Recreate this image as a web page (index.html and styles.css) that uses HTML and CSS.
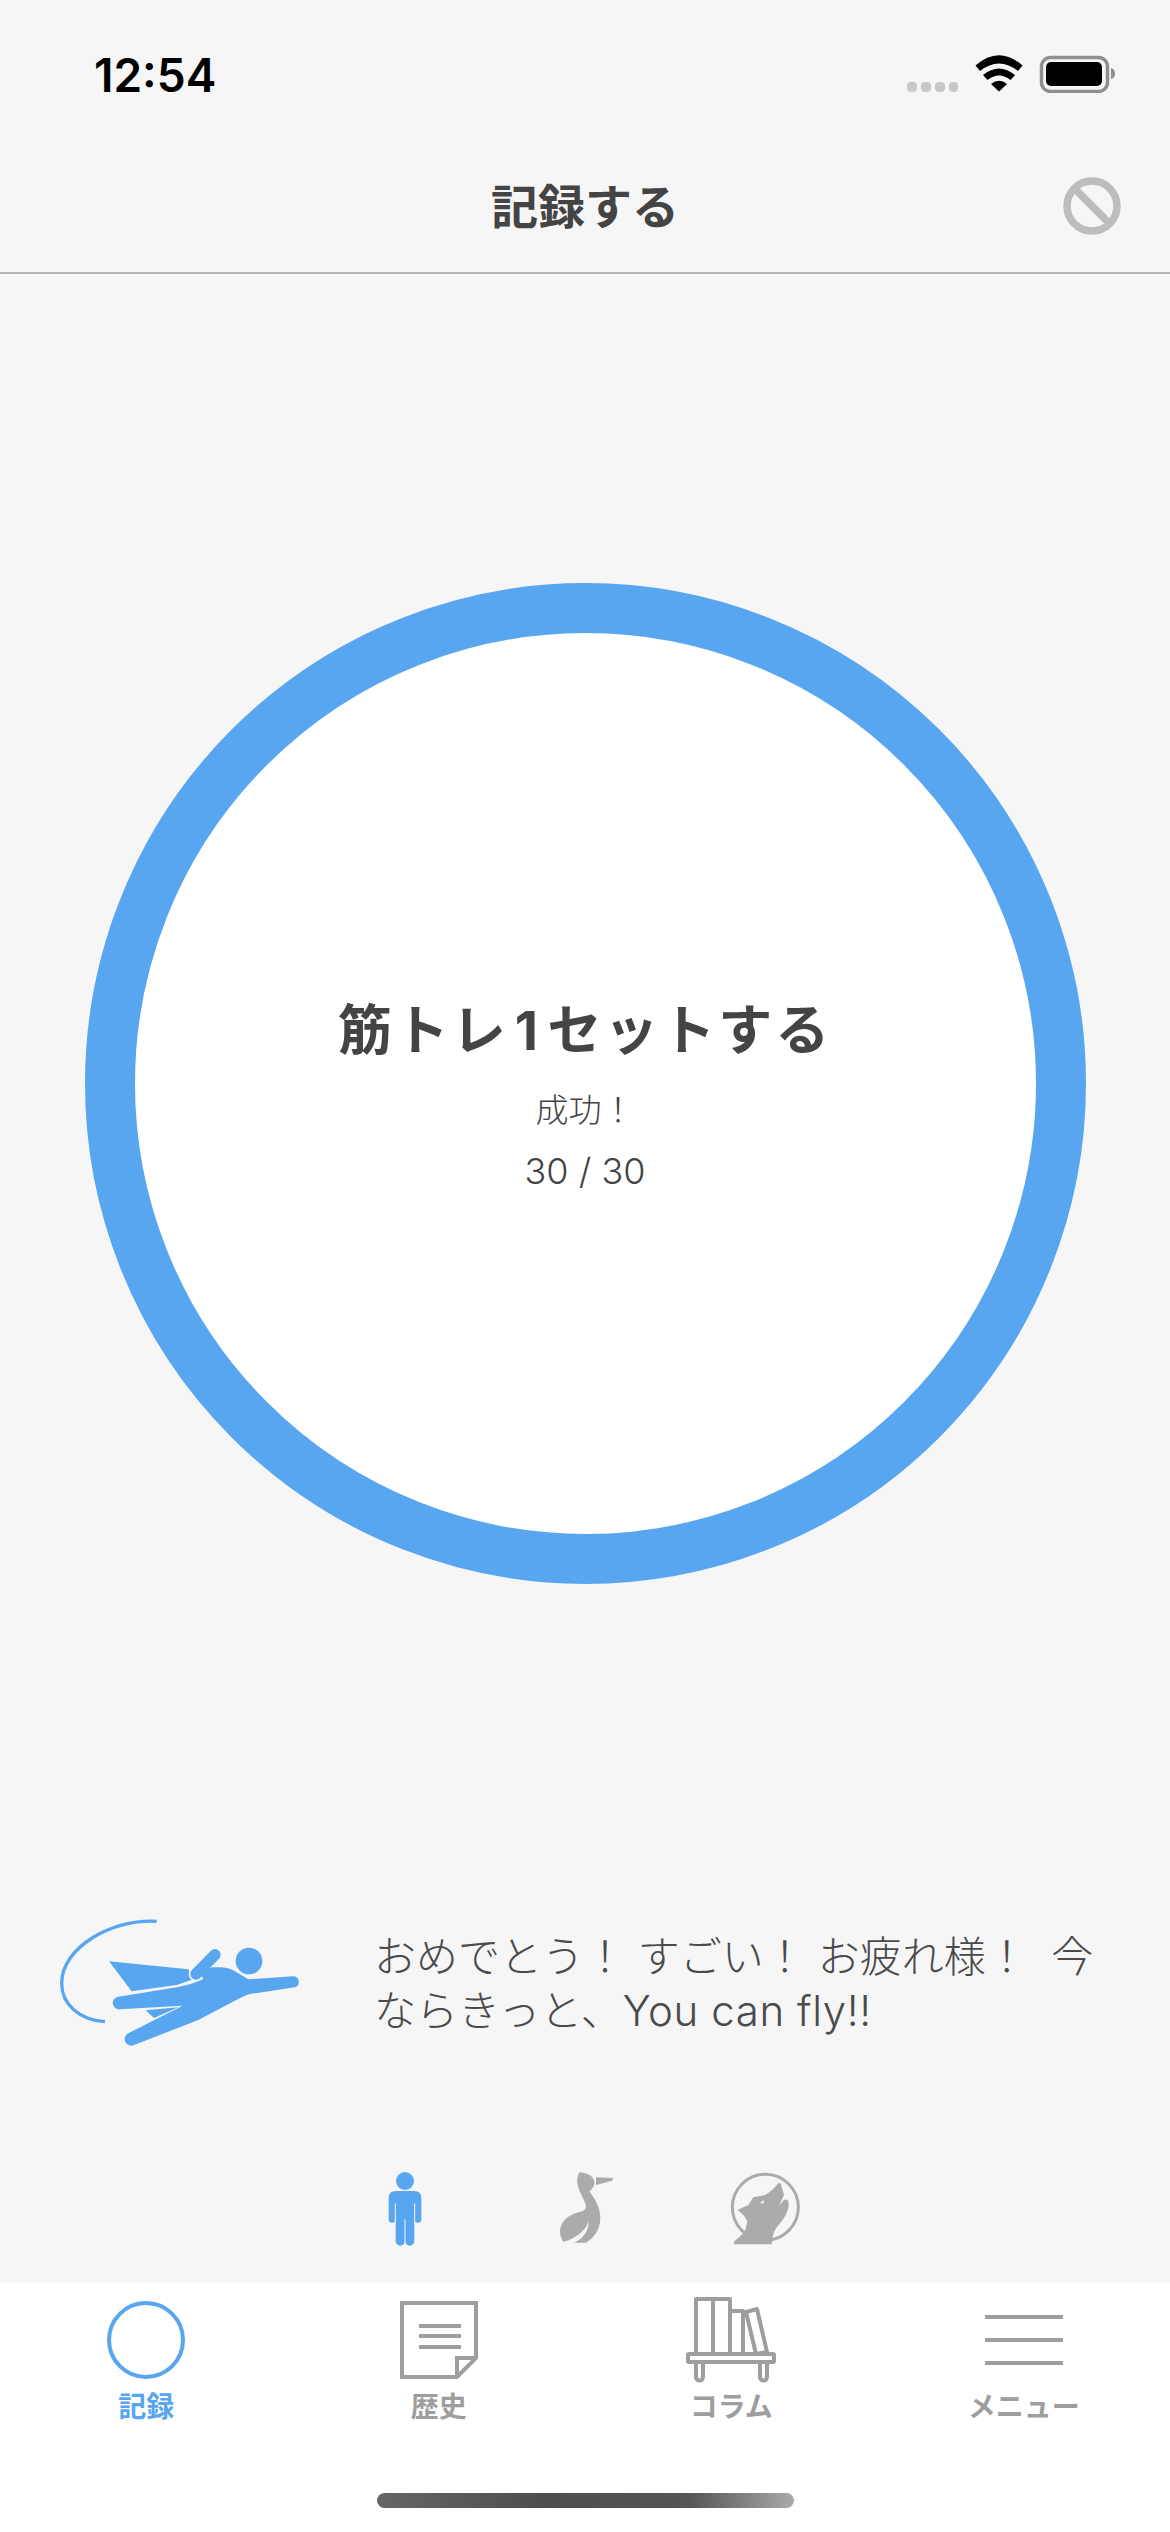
FILE: index.html
```html
<!DOCTYPE html>
<html lang="ja">
<head>
    <meta charset="UTF-8">
    <meta name="viewport" content="width=device-width, initial-scale=1.0">
    <title>記録する</title>
<link rel="stylesheet" href="styles.css">
</head>
<body>
    <div id="app">
        <div class="status">
            <span class="time">12:54</span>
            <svg class="status-icons" width="208" height="38" viewBox="0 0 208 38">
                <rect x="0" y="27" width="10" height="10" rx="4" fill="#c8c8c8"/>
                <rect x="14" y="27" width="10" height="10" rx="4" fill="#c8c8c8"/>
                <rect x="28" y="27" width="10" height="10" rx="4" fill="#c8c8c8"/>
                <rect x="42" y="27" width="9" height="10" rx="4" fill="#c8c8c8"/>
                <path d="M68.5 10.5Q92 -10 115.5 10.5L111 16Q92 1 73 16Z"/>
                <path d="M76 20Q92 7 108 20L103.5 25Q92 16 80.5 25Z"/>
                <path d="M84 29Q92 22.5 100 29L92 36.5Z"/>
                <rect x="134.5" y="2.5" width="66" height="34" rx="9" fill="none" stroke="#8f8f8f" stroke-width="3.5"/>
                <rect x="139" y="7" width="56" height="24" rx="5"/>
                <path d="M204 13Q208 14 208 19Q208 23 204 24Z" fill="#8f8f8f"/>
            </svg>
        </div>

        <div class="nav">
            <h1>記録する</h1>
            <svg class="ban" width="58" height="58" viewBox="0 0 58 58">
                <circle cx="29" cy="29" r="25" fill="none" stroke="#bdbdbd" stroke-width="7.5"/>
                <path d="M12 12L46 46" stroke="#bdbdbd" stroke-width="7.5"/>
            </svg>
        </div>

        <div class="ring">
            <div class="ring-title">筋トレ<span class="num">1</span>セットする</div>
            <div class="ring-sub">成功！</div>
            <div class="ring-count">30 / 30</div>
        </div>

        <div class="message">
            <svg width="330" height="200" viewBox="0 0 990 600">
                <path d="M380 124C250 115 95 200 95 310C95 375 150 420 225 425" fill="none" stroke="#58a6f0" stroke-width="10"/>
                <path class="blue" d="M237 244L475 268L490 298L440 315L305 334Z"/>
                <path class="blue" d="M347 391L445 382L372 414Z"/>
                <path d="M498 282L555 224" stroke="#f6f6f6" stroke-width="44" stroke-linecap="round"/>
                <path d="M498 282L555 224" stroke="#58a6f0" stroke-width="34" stroke-linecap="round"/>
                <circle class="blue" cx="657" cy="243" r="40"/>
                <path class="blue" d="M265 350L440 322Q490 312 520 297L510 280L545 262H575Q600 262 625 280L655 298L790 289A17 17 0 0 1 795 322L660 342Q640 348 600 370L505 420L312 495A18 18 0 0 1 295 460L458 377L270 388A19 19 0 0 1 265 350Z"/>
            </svg>
            <p>おめでとう！ すごい！ お疲れ様！ &nbsp;今ならきっと、<span class="latin">You can fly!!</span></p>
        </div>

        <div class="modes">
            <svg width="100" height="80" viewBox="0 0 300 240">
                <circle class="blue" cx="150" cy="45" r="27"/>
                <path class="blue" d="M122 75H178Q199 75 199 97V160A10.5 10.5 0 0 1 178 160V225A14 14 0 0 1 150 225A14 14 0 0 1 122 225V160A10.5 10.5 0 0 1 101 160V97Q101 75 122 75Z"/>
                <path d="M121 112V172M179 112V172M150 160V240" fill="none" stroke="#f6f6f6" stroke-width="3"/>
            </svg>
            <svg width="100" height="80" viewBox="0 0 300 240">
                <g transform="translate(18 -48)">
                    <path class="gray" d="M115 67C125 68 160 72 160 98C160 110 152 118 145 124C160 145 178 170 178 205C178 240 155 268 135 278H100C120 268 143 250 143 212C135 245 100 265 68 276C58 262 54 245 60 228C68 205 95 190 115 186C128 183 135 178 135 170C135 155 112 125 109 100C108 88 110 75 115 67Z"/>
                    <path class="gray" d="M165 82L215 84Q219 88 213 92L165 105Z"/>
                </g>
            </svg>
            <svg width="100" height="80" viewBox="0 0 300 240">
                <g transform="translate(-15 -48)">
                    <circle cx="166" cy="172" r="99" fill="none" stroke="#ababab" stroke-width="9"/>
                    <path class="gray" d="M72 283H185L188 262Q190 245 200 232L218 210Q238 180 236 160Q234 145 222 150L207 168L222 135L212 100H205Q185 125 165 135L130 142L115 165L82 180Q100 190 112 213Q108 240 100 250L72 275Z"/>
                    <path d="M150 160L160 150L162 160Z" fill="#f6f6f6"/>
                </g>
            </svg>
        </div>

        <div class="tabs">
            <div class="tab active">
                <svg width="90" height="90" viewBox="0 0 90 90">
                    <circle cx="45" cy="45" r="37" fill="none" stroke="#58a6f0" stroke-width="4"/>
                </svg>
                <span>記録</span>
            </div>
            <div class="tab">
                <svg width="90" height="90" viewBox="0 0 90 90" fill="none" stroke="#9e9e9e" stroke-width="4">
                    <path d="M8 8H82V63L63 82H8Z"/>
                    <path d="M63 82V63H82"/>
                    <path d="M25 31H67M25 41H67M25 52H67"/>
                </svg>
                <span>歴史</span>
            </div>
            <div class="tab">
                <svg width="90" height="90" viewBox="0 0 90 90" fill="none" stroke="#9e9e9e" stroke-width="4" stroke-linejoin="round">
                    <rect x="2" y="59" width="86" height="8" rx="1"/>
                    <path d="M10 59V4H44V59M27 4V59M44 16H57V59"/>
                    <path d="M60 17L71 14L81 57L70 59Z"/>
                    <path d="M10 67V82A3.5 3.5 0 0 0 17 82V67M74 67V82A3.5 3.5 0 0 0 81 82V67"/>
                </svg>
                <span>コラム</span>
            </div>
            <div class="tab">
                <svg width="90" height="90" viewBox="0 0 90 90" fill="none" stroke="#9e9e9e" stroke-width="4">
                    <path d="M6 22H84M6 45H84M6 68H84"/>
                </svg>
                <span>メニュー</span>
            </div>
            <div class="home-bar"></div>
        </div>
    </div>
</body>
</html>
```

FILE: styles.css
```css
*{
    padding: 0;
    margin: 0;
    box-sizing: border-box;
}
body{
    font-family: "Inter", "Noto Sans CJK JP", sans-serif;
    background: #f6f6f6;
}
#app{
    width: 1170px;
    height: 2532px;
    display: flex;
    flex-direction: column;
    align-items: center;
    overflow: hidden;
}
.blue{
    fill: #58a6f0;
}
.gray{
    fill: #ababab;
}

/* status bar */
.status{
    width: 100%;
    height: 110px;
    padding: 55px 55px 0 94px;
    display: flex;
    justify-content: space-between;
    align-items: flex-start;
}
.time{
    font-size: 46px;
    font-weight: 600;
    line-height: 40px;
    color: #000;
}

/* header */
.nav{
    width: 100%;
    height: 164px;
    border-bottom: 2px solid #b4b4b4;
    display: flex;
    justify-content: center;
    position: relative;
}
.nav h1{
    font-size: 47px;
    font-weight: 700;
    line-height: 66px;
    margin-top: 64px;
    color: #444;
}
.ban{
    position: absolute;
    right: 49px;
    top: 67px;
}

/* big circle */
.ring{
    width: 1001px;
    height: 1001px;
    margin-top: 309px;
    flex-shrink: 0;
    border: 50px solid #58a6f0;
    border-radius: 50%;
    background: #fff;
    display: flex;
    flex-direction: column;
    align-items: center;
    justify-content: center;
    padding-top: 23px;
    color: #444;
}
.ring-title{
    font-size: 54px;
    font-weight: 700;
    line-height: 66px;
    letter-spacing: 3px;
}
.num{
    margin: 0 6px;
}
.ring-sub{
    font-size: 33px;
    font-weight: 300;
    line-height: 40px;
    margin-top: 26px;
}
.ring-count{
    font-size: 36px;
    font-weight: 300;
    line-height: 44px;
    margin-top: 19px;
}

/* cheer message */
.message{
    width: 100%;
    margin-top: 296px;
    padding-left: 30px;
    display: flex;
    align-items: center;
    gap: 14px;
}
.message p{
    width: 735px;
    margin-top: 8px;
    font-size: 42px;
    font-weight: 300;
    line-height: 54px;
    color: #4a4a4a;
}
.latin{
    letter-spacing: 0.6px;
}

/* mode switch */
.modes{
    margin-top: 86px;
    display: flex;
    gap: 80px;
    height: 80px;
}

/* tab bar */
.tabs{
    width: 100%;
    margin-top: 37px;
    padding-top: 12px;
    flex: 1;
    background: #fff;
    display: grid;
    grid-template-columns: repeat(4, 1fr);
    grid-template-rows: 129px 1fr;
    justify-items: center;
}
.tab{
    display: flex;
    flex-direction: column;
    align-items: center;
    gap: 5px;
    color: #9e9e9e;
}
.tab svg{
    flex-shrink: 0;
}
.tab span{
    font-size: 28px;
    font-weight: 700;
    line-height: 34px;
}
.tab.active{
    color: #58a6f0;
}
.home-bar{
    grid-column: 1 / 5;
    width: 417px;
    height: 15px;
    margin-top: 69px;
    border-radius: 8px;
    background: linear-gradient(90deg, #666 0%, #4d4d4d 40%, #555 75%, #aaa 100%);
}
```
